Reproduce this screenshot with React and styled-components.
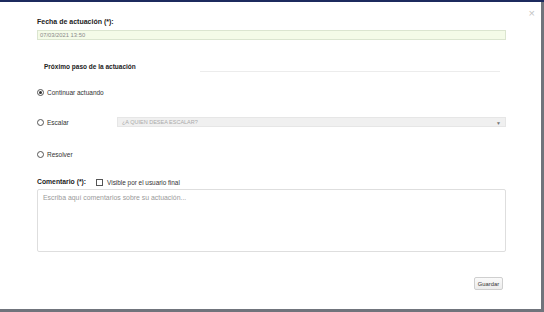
import React from 'react'
import styled, { createGlobalStyle } from 'styled-components'

const GlobalStyle = createGlobalStyle`
  html, body {
    margin: 0;
    padding: 0;
    background: #70747c;
    font-family: "Liberation Sans", Arial, sans-serif;
  }
  * { box-sizing: border-box; }
`;

const Page = styled.div`
  width: 544px;
  height: 312px;
  overflow: hidden;
  display: flex;
  flex-direction: column;
`;

const TopStrip = styled.div`
  height: 2px;
  background: #1c2a5e;
`;

const Modal = styled.div`
  position: relative;
  width: 541px;
  height: 307px;
  background: #fff;
  padding: 15px 35px 0 37px;
  display: flex;
  flex-direction: column;
`;

const Close = styled.span`
  position: absolute;
  top: 6px;
  right: 6px;
  font-size: 11px;
  line-height: 11px;
  color: #c4c4c4;
`;

const Label = styled.div`
  font-size: ${p => p.$size || 7}px;
  font-weight: bold;
  color: #222;
  line-height: 10px;
  height: 10px;
`;

const DateInput = styled.div`
  margin-top: 3px;
  height: 10px;
  background: #f4fbe8;
  border: 1px solid #dbe5d0;
  font-size: 5.8px;
  line-height: 8px;
  color: #8a8a8a;
  padding-left: 2px;
`;

const SectionRow = styled.div`
  margin-top: 22px;
  display: flex;
  align-items: flex-end;
  height: 10px;
  padding-left: 7px;
`;

const SectionTitle = styled.div`
  font-size: 6.5px;
  font-weight: bold;
  color: #222;
  line-height: 10px;
`;

const SectionLine = styled.div`
  margin-left: auto;
  margin-right: 6px;
  width: 300px;
  border-bottom: 1px solid #ececec;
`;

const OptionRow = styled.div`
  margin-top: ${p => p.$gap}px;
  height: 10px;
  display: flex;
  align-items: center;
`;

const Radio = styled.span`
  width: 7px;
  height: 7px;
  border-radius: 50%;
  border: 1px solid #555;
  background: #fff;
  display: flex;
  align-items: center;
  justify-content: center;
  flex: none;
  &::after {
    content: '';
    width: 3px;
    height: 3px;
    border-radius: 50%;
    background: ${p => (p.$checked ? '#333' : 'transparent')};
  }
`;

const OptionText = styled.span`
  font-size: 6.5px;
  color: #333;
  margin-left: 3px;
  width: ${p => (p.$w ? `${p.$w}px` : 'auto')};
`;

const Select = styled.div`
  flex: 1;
  height: 10px;
  background: #f0f0f0;
  border: 1px solid #e6e6e6;
  display: flex;
  align-items: center;
  padding: 0 4px;
  font-size: 5.5px;
  color: #ababab;
`;

const Arrow = styled.span`
  margin-left: auto;
  font-size: 5px;
  color: #777;
  margin-top: 2px;
`;

const CommentRow = styled.div`
  margin-top: 18px;
  height: 10px;
  display: flex;
  align-items: center;
`;

const Check = styled.span`
  margin-left: 10px;
  width: 7px;
  height: 7px;
  border: 1px solid #555;
  background: #fff;
  flex: none;
`;

const CheckText = styled.span`
  margin-left: 4px;
  font-size: 6.4px;
  color: #333;
`;

const TextArea = styled.div`
  margin-top: 2px;
  height: 63px;
  border: 1px solid #dedede;
  border-radius: 2px;
  padding: 3px 5px;
  font-size: 6.9px;
  line-height: 9px;
  color: #9a9a9a;
`;

const Footer = styled.div`
  margin-top: 25px;
  display: flex;
  justify-content: flex-end;
  padding-right: 3px;
`;

const Button = styled.button`
  height: 13px;
  width: 29px;
  padding: 0;
  border: 1px solid #cfcfcf;
  border-radius: 2px;
  background: linear-gradient(#fafafa, #ececec);
  font-family: "Liberation Sans", Arial, sans-serif;
  font-size: 5.8px;
  color: #333;
`;

export default function App() {
  return (
    <>
      <GlobalStyle />
      <Page>
        <TopStrip />
        <Modal>
          <Close>×</Close>
          <Label>Fecha de actuación (*):</Label>
          <DateInput>07/03/2021 13:50</DateInput>

          <SectionRow>
            <SectionTitle>Próximo paso de la actuación</SectionTitle>
            <SectionLine />
          </SectionRow>

          <OptionRow $gap={15}>
            <Radio $checked />
            <OptionText>Continuar actuando</OptionText>
          </OptionRow>

          <OptionRow $gap={20}>
            <Radio />
            <OptionText $w={70}>Escalar</OptionText>
            <Select>
              ¿A QUIEN DESEA ESCALAR?
              <Arrow>▼</Arrow>
            </Select>
          </OptionRow>

          <OptionRow $gap={22}>
            <Radio />
            <OptionText>Resolver</OptionText>
          </OptionRow>

          <CommentRow>
            <Label $size={6.8}>Comentario (*):</Label>
            <Check />
            <CheckText>Visible por el usuario final</CheckText>
          </CommentRow>

          <TextArea>Escriba aquí comentarios sobre su actuación...</TextArea>

          <Footer>
            <Button>Guardar</Button>
          </Footer>
        </Modal>
      </Page>
    </>
  )
}
